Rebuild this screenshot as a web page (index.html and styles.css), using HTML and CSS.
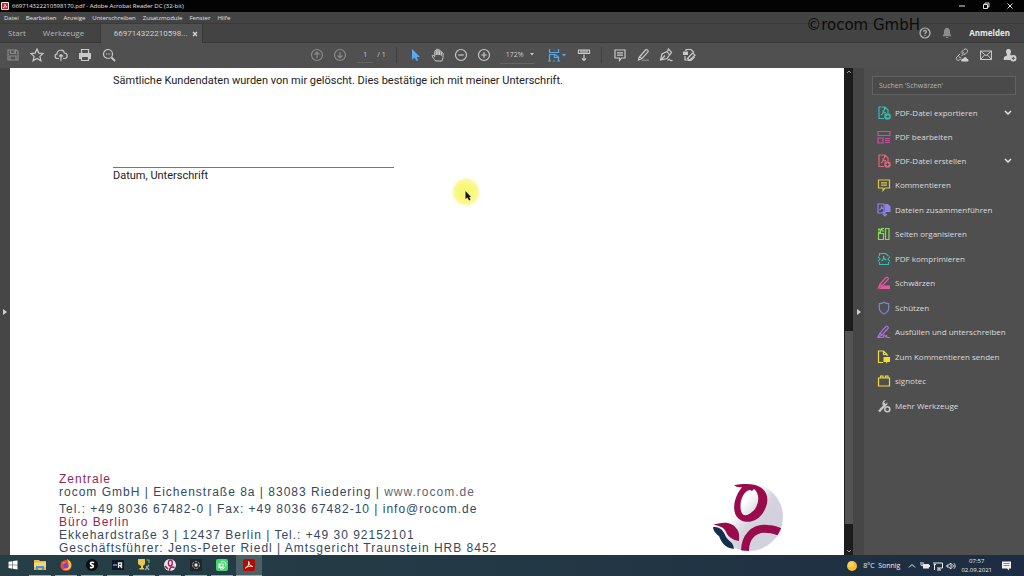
FILE: index.html
```html
<!DOCTYPE html>
<html lang="de">
<head>
<meta charset="utf-8">
<meta name="viewport" content="width=device-width, initial-scale=1">
<title>669714322210598170.pdf - Adobe Acrobat Reader DC (32-bit)</title>
<link rel="stylesheet" href="styles.css">
</head>
<body class="desktop">
<header class="titlebar">
  <svg class="app-icon" viewBox="0 0 8 8"><rect width="8" height="8" rx="1" fill="#f3e9e9"/><rect x="1" y="1" width="6" height="6" fill="#c9252d"/><path d="M2 6C3.500 5 4 3.500 4 2 4 3.500 5 5 6 5 4.500 4.500 3 5 2 6Z" fill="none" stroke="#fff" stroke-width=".6"/></svg>
  <h1 class="window-title">669714322210598170.pdf - Adobe Acrobat Reader DC (32-bit)</h1>
  <div class="window-buttons">
    <button class="btn" aria-label="Minimieren"><svg viewBox="0 0 8 8"><path d="M1 4h6" class="thin"/></svg></button>
    <button class="btn" aria-label="Wiederherstellen"><svg viewBox="0 0 8 8"><path d="M1.500 2.500h4v4h-4zM3 2.500V1h4v4H5.500" class="thin"/></svg></button>
    <button class="btn" aria-label="Schließen"><svg viewBox="0 0 8 8"><path d="M1.500 1.500l5 5M6.500 1.500l-5 5" class="thin"/></svg></button>
  </div>
</header>
<nav class="menubar" aria-label="Menü">
  <button class="btn">Datei</button><button class="btn">Bearbeiten</button><button class="btn">Anzeige</button><button class="btn">Unterschreiben</button><button class="btn">Zusatzmodule</button><button class="btn">Fenster</button><button class="btn">Hilfe</button>
</nav>
<div class="tabs">
  <button class="btn tab">Start</button>
  <button class="btn tab tab-tools">Werkzeuge</button>
  <div class="tab-active"><span>669714322210598...</span><button class="btn tab-close" aria-label="Tab schließen"><svg viewBox="0 0 6 6"><path d="M1 1l4 4M5 1L1 5" stroke="#d8d8d8" stroke-width="1.300"/></svg></button></div>
  <div class="account">
    <button class="btn" aria-label="Hilfe"><svg class="i12" viewBox="0 0 12 12"><circle cx="6" cy="6" r="5" class="ln"/><path d="M4.500 4.700C4.600 3 7.500 3 7.400 4.700 7.400 5.700 6 5.700 6 7M6 8v1" class="ln"/></svg></button>
    <button class="btn" aria-label="Mitteilungen"><svg class="i12" viewBox="0 0 12 12"><path d="M6 .8C3.500 1 3 3 3 5 3 7.500 2 8 1.500 9.300h9C10 8 9 7.500 9 5 9 3 8.500 1 6 .8ZM4.700 10h2.600C7 11.500 5 11.500 4.700 10Z" fill="#8b8b8b"/></svg></button>
    <button class="btn login">Anmelden</button>
  </div>
  <div class="watermark">©rocom GmbH</div>
</div>
<div class="toolbar">
  <div class="tools-left">
    <button class="btn" aria-label="Speichern"><svg class="i14 dim" viewBox="0 0 14 14"><path d="M2 2h8.500L12 3.500V12H2zM4.500 2v3.500h5V2M4 12V8h6v4M8 3v1.500" class="ln"/></svg></button>
    <button class="btn" aria-label="Favorit"><svg class="i14" viewBox="0 0 14 14"><path d="M7 1l1.800 4.100 4.400.400-3.300 2.900 1 4.400L7 10.500l-3.900 2.300 1-4.400L.8 5.500l4.400-.4z" class="ln"/></svg></button>
    <button class="btn" aria-label="Hochladen"><svg class="i14" viewBox="0 0 14 14"><path d="M5 10.500H3.500C.5 10.500.3 6.500 3 6.200 3 1.500 9.500.8 10.300 5 14 5 14 10.500 10.800 10.500H9M7 13V6.500M5 8.500l2-2 2 2" class="ln"/></svg></button>
    <button class="btn" aria-label="Drucken"><svg class="i14" viewBox="0 0 14 14"><path d="M3.500 5V1.500h7V5" class="ln"/><path d="M1 5h12v6h-2V8.500H3V11H1z" fill="#c9c9c9"/><path d="M3.500 8.500h7v4h-7z" class="ln"/></svg></button>
    <button class="btn" aria-label="Suchen"><svg class="i14" viewBox="0 0 14 14"><circle cx="6" cy="6" r="4.500" class="ln"/><path d="M9.500 9.500L13 13" stroke="#c9c9c9" stroke-width="1.800"/><path d="M4 6h4.500" class="ln" stroke-dasharray="1 .6"/></svg></button>
  </div>
  <div class="tools-mid">
    <button class="btn" aria-label="Vorige Seite"><svg class="i14 dim" viewBox="0 0 14 14"><circle cx="7" cy="7" r="5.500" class="ln"/><path d="M7 10V4M4.500 6.500L7 4l2.500 2.500" class="ln"/></svg></button>
    <button class="btn" aria-label="Nächste Seite"><svg class="i14 dim" viewBox="0 0 14 14"><circle cx="7" cy="7" r="5.500" class="ln"/><path d="M7 4v6M4.500 7.500L7 10l2.500-2.500" class="ln"/></svg></button>
    <div class="page-no"><input class="page-input" aria-label="Seite" value="1"><span>/ 1</span></div>
    <i class="sep"></i>
    <button class="btn" aria-label="Auswahl"><svg class="i14" viewBox="0 0 14 14"><path d="M4 1v11l2.500-2.500L8.500 13l1.700-.8L8.500 9H12z" fill="#58a9f0"/></svg></button>
    <button class="btn" aria-label="Hand"><svg class="i14" viewBox="0 0 14 14"><path d="M4.500 13C3.500 11 1.500 9.500 1 7.500c.8-.8 1.800 0 2.700 1.200V3.500c0-1.300 1.600-1.300 1.600 0V7 2c0-1.300 1.700-1.300 1.700 0v5V2.500c0-1.300 1.700-1.300 1.700 0V7 4c0-1.300 1.700-1.300 1.700 0V7.500 5.500c0-1.300 1.700-1.300 1.700 0 .2 3-.1 5-1.200 7.500z" class="thin"/></svg></button>
    <button class="btn" aria-label="Verkleinern"><svg class="i14" viewBox="0 0 14 14"><circle cx="7" cy="7" r="5.500" class="ln"/><path d="M4.300 7h5.400" class="ln"/></svg></button>
    <button class="btn" aria-label="Vergrößern"><svg class="i14" viewBox="0 0 14 14"><circle cx="7" cy="7" r="5.500" class="ln"/><path d="M4.300 7h5.400M7 4.300v5.400" class="ln"/></svg></button>
    <div class="zoom"><select class="zoom-select" aria-label="Zoom"><option>172%</option></select><svg class="caret" viewBox="0 0 4 3"><path d="M0 0h4L2 2.500z" fill="#c9c9c9"/></svg></div>
    <button class="btn fit blue" aria-label="Seitenbreite"><svg class="i14" viewBox="0 0 14 14"><path d="M2.500 1v3.500h9V1M2.500 13V6.500H8L11.500 9v4M7.500 6.500v3h4M1 13h3M6 13h2M10 13h3" class="ln"/></svg><svg class="caret" viewBox="0 0 4 3"><path d="M0 0h4L2 2.500z" fill="#58a9e8"/></svg></button>
    <button class="btn read" aria-label="Lesemodus"><svg class="i14" viewBox="0 0 14 14"><path d="M1.500 2h11v3.500h-11zM4 2v3M6 2v3M8 2v3M10 2v3M7 6.500v6M5 10.500l2 2 2-2" class="ln"/></svg></button>
    <i class="sep"></i>
    <button class="btn" aria-label="Kommentar"><svg class="i14" viewBox="0 0 14 14"><path d="M2 2h10v8H8.500l-2 2.500V10H2zM4 4.800h6M4 7.200h6" class="ln"/></svg></button>
    <button class="btn" aria-label="Markieren"><svg class="i14" viewBox="0 0 14 14"><path d="M3 9.500L9.500 2c1-1 3.500.2 2.500 2L6 10.500 2.500 12zM3.500 9L6 10.700" class="ln"/><path d="M7 11.500h6V13H5z" fill="#808080"/></svg></button>
    <button class="btn" aria-label="Signieren"><svg class="i14" viewBox="0 0 14 14"><path d="M1.500 12L3 6l5-2.500L10.500 7 8 10.500zM8.500 3L9.500 1l3 3.500L10.700 7M2 12l4-4.500M8.500 12.500c1-1.500 2-1.500 2.500-.5s1.500.5 2.500.5" class="ln"/></svg></button>
    <button class="btn" aria-label="Stempel"><svg class="i14" viewBox="0 0 14 14"><path d="M4 3V1.500h5L12 4.500M3 8v4h3M12.500 9L9 12.500H6" class="ln"/><path d="M1 3.500h5v3.500H1z" fill="#c9c9c9"/><path d="M5.500 10.500L10.500 5l2.500 2.200L8 12z" class="ln"/></svg></button>
  </div>
  <div class="tools-right">
    <button class="btn" aria-label="Link teilen"><svg class="i14" viewBox="0 0 14 14"><path d="M6.500 8L9 5.500M6 4.500l3-3c2-1.500 4.500.5 3.200 2.700l-3 3M5 6L1.800 9c-1.500 2 .7 4.300 2.700 3L6 10.500M4 8.500c0 1 1.500 1.500 2.200.8M7 6c-.3-1.300 1.500-2 2.300-.8" class="thin"/><path d="M6.500 13.500c-1-2 .5-3 1.700-2.600C8.700 8.500 12 8.700 12 11c2 0 2 2.500.5 2.500z" fill="#d0d0d0"/></svg></button>
    <button class="btn" aria-label="E-Mail"><svg class="i14" viewBox="0 0 14 14"><path d="M1.500 3h11v8.500h-11zM1.500 3L7 7.700 12.500 3M1.500 11.500l4-4.500M12.500 11.500l-4-4.500" class="thin"/></svg></button>
    <button class="btn" aria-label="Freigeben"><svg class="i14" viewBox="0 0 14 14"><path d="M5.500 1C8 1 8.500 3.500 7.500 5.500 7 7 7.500 7.500 9 8L7 12H.8C.5 9 1.500 8.500 3.500 7.800 4.500 7.500 4 6.500 3.500 5.500 2.500 3.500 3 1 5.500 1Z" fill="#d0d0d0"/><circle cx="10.300" cy="10.300" r="3.200" fill="#d0d0d0"/><path d="M8.800 10.300h3M10.300 8.800v3" stroke="#505050"/></svg></button>
  </div>
</div>
<main class="workspace">
  <button class="btn side-strip" aria-label="Navigationsfenster"><svg class="arrow" viewBox="0 0 4 6"><path d="M0 0l4 3-4 3z" fill="#d0d0d0"/></svg></button>
  <article class="page">
    <section class="letter">
      <p class="statement">Sämtliche Kundendaten wurden von mir gelöscht. Dies bestätige ich mit meiner Unterschrift.</p>
      <p class="signature">Datum, Unterschrift</p>
    </section>
    <footer class="imprint">
      <div class="addresses">
        <p class="office">Zentrale</p>
        <p class="address">rocom GmbH | Eichenstraße 8a | 83083 Riedering | <a class="plain" href="#">www.rocom.de</a></p>
        <p class="contact">Tel.: +49 8036 67482-0 | Fax: +49 8036 67482-10 | info@rocom.de</p>
        <p class="office">Büro Berlin</p>
        <p>Ekkehardstraße 3 | 12437 Berlin | Tel.: +49 30 92152101</p>
        <p>Geschäftsführer: Jens-Peter Riedl | Amtsgericht Traunstein HRB 8452</p>
      </div>
      <svg class="logo" viewBox="0 0 72 70" role="img" aria-label="rocom">
        <defs><linearGradient id="disc" gradientUnits="userSpaceOnUse" x1="18" y1="18" x2="46" y2="42"><stop offset=".3" stop-color="#fff"/><stop offset=".8" stop-color="#d5d4df"/><stop offset="1" stop-color="#d2d1dd"/></linearGradient>
        <clipPath id="round"><circle cx="37" cy="34" r="34"/></clipPath></defs>
        <circle cx="37" cy="34" r="34" fill="url(#disc)"/>
        <path d="M22 2C31 .5 43 0 48 4 57 9 57 20 52 28 47 38 35 42 27 36 19 30 22 15 28 7L30 4Q25 5 22 2ZM38 7C31 8 27 19 29 28 31 36 39 31 43 26 48 18 47 10 42 6L40 8Z" fill="#990b4b" fill-rule="evenodd"/>
        <g clip-path="url(#round)"><path d="M33 71C32 54 42 44 56 46Q62 46 70 50" fill="none" stroke="#990b4b" stroke-width="8"/></g>
        <path d="M1 42C9 39 19 38 24 45 28 49 27 54 27 58 21 57 16 54 14 49 12 44 6 42 1 42Z" fill="#990b4b"/>
        <path d="M1 44C9 43 12 49 14 54 17 59 21 58 22 66 12 65 9 58 7 53 4 51 1 47 1 44Z" fill="#12304d"/>
      </svg>
    </footer>
    <svg class="pointer" viewBox="0 0 32 32"><defs><radialGradient id="glow"><stop offset=".4" stop-color="#f9f777"/><stop offset=".75" stop-color="#faf99a"/><stop offset="1" stop-color="#fff" stop-opacity="0"/></radialGradient></defs><circle cx="16" cy="16" r="16" fill="url(#glow)"/><path d="M15.500 15v8l2-1.500 1.500 3 1.500-.7-1.300-2.800H21z" fill="#111"/></svg>
  </article>
  <div class="scrollbar" aria-hidden="true">
    <svg class="scroll-arrow" viewBox="0 0 6 4"><path d="M1 3l2-2 2 2" class="thin"/></svg>
    <i class="track"></i><i class="thumb"></i><i class="rest"></i>
    <svg class="scroll-arrow" viewBox="0 0 6 4"><path d="M1 1l2 2 2-2" class="thin"/></svg>
  </div>
  <button class="btn side-strip strip-right" aria-label="Werkzeugfenster"><svg class="arrow" viewBox="0 0 4 6"><path d="M0 0l4 3-4 3z" fill="#d0d0d0"/></svg></button>
  <aside class="panel">
    <input class="search" type="search" aria-label="Werkzeuge suchen" placeholder="Suchen 'Schwärzen'">
    <ul class="tool-list">
      <li><button class="btn tool teal"><svg class="i14" viewBox="0 0 14 14"><path d="M7 12.500H2V1h6l3 3v3M7.500 1v3.500M4 9c2-1 2.500-3 2-5 0 2 1 3 3 3" class="ln"/><circle cx="10.500" cy="10.500" r="3.300" fill="currentColor"/><path d="M8.800 10.500h3M10.500 9l1.500 1.500-1.500 1.500" stroke="#4f4f4f" fill="none"/></svg><span>PDF-Datei exportieren</span><svg class="chev" viewBox="0 0 8 6"><path d="M1 1l3 3 3-3"/></svg></button></li>
      <li><button class="btn tool magenta"><svg class="i14" viewBox="0 0 14 14"><path d="M1 1.500h12v4H1zM1 8h5v5H1zM8 8.500h5M8 10.500h5M8 12.500h5" class="ln"/></svg><span>PDF bearbeiten</span></button></li>
      <li><button class="btn tool rose"><svg class="i14" viewBox="0 0 14 14"><path d="M7 12.500H2V1h6l3 3v3M7.500 1v3.500M4 9c2-1 2.500-3 2-5 0 2 1 3 3 3" class="ln"/><circle cx="10.500" cy="10.500" r="3.300" fill="currentColor"/><path d="M8.800 10.500h3.400M10.500 8.800v3.400" stroke="#4f4f4f"/></svg><span>PDF-Datei erstellen</span><svg class="chev" viewBox="0 0 8 6"><path d="M1 1l3 3 3-3"/></svg></button></li>
      <li><button class="btn tool yellow"><svg class="i14" viewBox="0 0 14 14"><path d="M1.500 2h11v8H8l-2 2.500V10H1.500zM4 4.800h6M4 7.200h6" class="ln"/></svg><span>Kommentieren</span></button></li>
      <li><button class="btn tool violet"><svg class="i14" viewBox="0 0 14 14"><path d="M1 1h6v9H1zM2.500 7c2-1 2.500-2 2-4 0 1.500.5 2.500 2 2.500M5.500 9H8v4M6 11l2 2 2-2" class="ln"/><path d="M8 1h3l2.500 2.500V9H8z" fill="currentColor"/></svg><span>Dateien zusammenführen</span></button></li>
      <li><button class="btn tool green"><svg class="i14" viewBox="0 0 14 14"><path d="M1.500 6.500h5v6h-5zM8.500 1.500H12v11H8.500z" class="ln"/><path d="M1 1.500h2v2H1zM4 1h3v1H5l2 2-1 1-2-2v2H3V3zM1 4.500h3V6H1z" fill="currentColor"/></svg><span>Seiten organisieren</span></button></li>
      <li><button class="btn tool teal"><svg class="i14" viewBox="0 0 14 14"><path d="M2.500 4V1.500h6l3 2.500M11.500 10v2.500h-9V10M1 4.500l2 2.500-2 2.500M13 4.500L11 7l2 2.500M4.500 9c2-1 2.500-3 2-5 0 2 1 3.500 3 4" class="ln"/></svg><span>PDF komprimieren</span></button></li>
      <li><button class="btn tool pink"><svg class="i14" viewBox="0 0 14 14"><path d="M1.500 12L3 8l6-6.500c1-1 3 .8 2 2L5 10zM3 8l2 2" class="ln"/><path d="M7 9.500h6V13H1.500z" fill="currentColor"/></svg><span>Schwärzen</span></button></li>
      <li><button class="btn tool indigo"><svg class="i14" viewBox="0 0 14 14"><path d="M7 1.200c1.500 1 3 1.500 4.700 1.500V7c0 3-2 4.800-4.700 6-2.700-1.200-4.700-3-4.700-6V2.700C4 2.700 5.500 2.200 7 1.200Z" class="ln"/></svg><span>Schützen</span></button></li>
      <li><button class="btn tool purple"><svg class="i14" viewBox="0 0 14 14"><path d="M1 12L3 8l6-6.500c1-1 3 .8 2 2L5 10zM3 8l2 2M1 12.500h5c1-4 2.500-2.500 2 0 1.500-3 2-2 2 0h3" class="ln"/></svg><span>Ausfüllen und unterschreiben</span></button></li>
      <li><button class="btn tool lemon"><svg class="i14" viewBox="0 0 14 14"><path d="M6 12.500H1.500V1h5L10 4.500V6M6.500 1v3.500H10" class="ln"/><path d="M6.500 7H13v5h-2.500L9 13.500V12H6.500z" fill="currentColor"/></svg><span>Zum Kommentieren senden</span></button></li>
      <li><button class="btn tool lemon"><svg class="i14" viewBox="0 0 14 14"><path d="M1.500 4h11v8h-11zM3.500 4V2H6v2M8.500 4V2H11v2" class="ln"/></svg><span>signotec</span></button></li>
      <li><button class="btn tool grey"><svg class="i14" viewBox="0 0 14 14"><path d="M2 12.500L8 6" stroke="currentColor" stroke-width="2.400"/><path d="M9 1C6 1 4.500 4 6 6.500 8.500 8 11 6 10.500 3.500L8.500 5 7 3.500z" fill="currentColor"/><circle cx="10.300" cy="10.300" r="2.500" fill="#4f4f4f" stroke="currentColor" stroke-width="1.500"/></svg><span>Mehr Werkzeuge</span></button></li>
    </ul>
  </aside>
</main>
<footer class="taskbar">
  <div class="apps">
    <button class="btn app start" aria-label="Start"><svg class="i12" viewBox="0 0 12 12"><path d="M1.500 2.800l4-.6v3.500h-4zM6 2.100l4.500-.6v4.200H6zM1.500 6.200h4v3.500l-4-.6zM6 6.200h4.500v4.200L6 9.800z" fill="#fff"/></svg></button>
    <button class="btn app run" aria-label="Explorer"><svg class="i12" viewBox="0 0 12 12"><path d="M0 1h5l1 1h6v9H0z" fill="#e9b84a"/><path d="M0 3.500h12V8H0z" fill="#f6d778"/><path d="M2 7h8v4H8V9H4v2H2z" fill="#3d98dc"/></svg></button>
    <button class="btn app run" aria-label="Firefox"><svg class="i12" viewBox="0 0 12 12"><circle cx="6" cy="6.500" r="5.500" fill="#f0483e"/><path d="M7 0c4 2 5 5 4 8s-6 4-8 2c5 0 7-4 4-10Z" fill="#ffc43a"/><path d="M1 2l2 1.500h3L4.500 6z" fill="#ff9427"/><circle cx="6" cy="6.700" r="2.600" fill="#7a45d0"/></svg></button>
    <button class="btn app run" aria-label="S"><svg class="i12" viewBox="0 0 12 12"><circle cx="6" cy="6" r="6" fill="#0b0d0f"/><path d="M8 3.800C6 2.500 3.500 4 5 5.500l2 1C8 8 6 9.300 4 8.200" fill="none" stroke="#fff" stroke-width="1.700"/></svg></button>
    <button class="btn app run" aria-label="R"><svg class="i12" viewBox="0 0 12 12"><path d="M0 1h12v10H0z" fill="#121923"/><path d="M1 5h4v2H1z" fill="#477fce"/><path d="M6.500 9V4h3v2.500h-3M8 6.500L10 9" fill="none" stroke="#e8e8e8" stroke-width="1.300"/></svg></button>
    <button class="btn app run" aria-label="Werkzeug"><svg class="i12" viewBox="0 0 12 12"><path d="M0 0h7v5L5 7v2h1v1.500H1.500V9H3V7L0 5z" fill="#ebc64a"/><path d="M8.500 1H11v3" fill="none" stroke="#67b968" stroke-width="1.200"/><path d="M7 11l4-5M8 7l3 4" fill="none" stroke="#98a5a5" stroke-width="1.300"/></svg></button>
    <button class="btn app run" aria-label="rocom"><svg class="i12" viewBox="0 0 12 12"><circle cx="6" cy="6" r="6" fill="#eee5ec"/><ellipse cx="6.300" cy="4" rx="2" ry="3" fill="none" stroke="#a01853" stroke-width="1.300"/><path d="M5.500 12c0-4 2-4.500 5-3.500M1 7l3 3" fill="none" stroke="#a01853" stroke-width="1.500"/></svg></button>
    <button class="btn app run" aria-label="Aufnahme"><svg class="i12" viewBox="0 0 12 12"><rect width="12" height="12" rx="1" fill="#22252b"/><circle cx="6" cy="6" r="3.500" fill="none" stroke="#aab8bd" stroke-dasharray="2 1"/><circle cx="6" cy="6" r="1.700" fill="#e0e4e6"/></svg></button>
    <button class="btn app run" aria-label="Sync"><svg class="i12" viewBox="0 0 12 12"><rect width="12" height="12" rx="2" fill="#43d76d"/><path d="M2.500 4.500h5v4.500h-5z" fill="#fff"/><path d="M5 3c3-2 6 1 4.500 4M9 8c-1 2-3 2.500-5 1.500" fill="none" stroke="#fff"/><circle cx="5.500" cy="6.500" r="1.200" fill="#43d76d"/></svg></button>
    <button class="btn app run current" aria-label="Acrobat"><svg class="i12" viewBox="0 0 12 12"><rect width="12" height="12" rx="2" fill="#b30b00"/><path d="M2.500 9C5 8 6.200 5 5.700 2.500 5.700 5 7.500 7.300 9.700 7.500 7 6.500 4 7.500 2.500 9Z" fill="none" stroke="#fff"/></svg></button>
  </div>
  <div class="tray">
    <svg class="i12" viewBox="0 0 12 12"><circle cx="6" cy="6" r="5" fill="#f8bd32"/><circle cx="5" cy="4.500" r="3" fill="#fbd35b"/></svg>
    <span class="weather">8°C&nbsp; Sonnig</span>
    <div class="tray-icons">
      <svg class="i10" viewBox="0 0 10 10"><path d="M2 6.500l3-3 3 3" class="thin"/></svg>
      <svg class="i10" viewBox="0 0 10 10"><path d="M3 3h6v4.500H3z" fill="#e8e8e8"/><path d="M1 1v3c0 1 2 1 2 0V1" class="thin"/><path d="M9.500 4v2" class="thin"/></svg>
      <svg class="i10" viewBox="0 0 10 10"><path d="M2 2h7.500v5H4M6 7v2M4 9h4M1 1v2.500h2M1.500 3.500V9" class="thin"/></svg>
      <svg class="i10" viewBox="0 0 10 10"><path d="M1 4h1.500L5 2v6L2.500 6H1zM6.500 3.500c1 1 1 2 0 3M8 2.300c1.500 1.700 1.500 3.700 0 5.400" class="thin"/></svg>
    </div>
    <time class="clock" datetime="2021-09-02T07:57"><span>07:57</span><span>02.09.2021</span></time>
    <button class="btn" aria-label="Benachrichtigungen"><svg class="i12" viewBox="0 0 12 12"><path d="M1 1.500h9v7H8v2L6 8.500H1z" fill="#f0f0f0"/><path d="M2.500 3.500h6M2.500 5.500h6" stroke="#506070" stroke-width=".7"/></svg></button>
  </div>
</footer>
</body>
</html>
```
FILE: styles.css
```css
* { box-sizing: border-box; }
html, body { height: 100%; }
body, h1, p, ul { margin: 0; padding: 0; }
ul { list-style: none; }
svg { display: block; flex: none; }

.desktop {
  display: flex;
  flex-direction: column;
  overflow: hidden;
  background: #4f4f4f;
  color: #e2e2e2;
  font: 7px/10px "Open Sans", "Noto Sans", sans-serif;
}
.btn {
  display: flex;
  align-items: center;
  padding: 0;
  border: 0;
  background: none;
  color: inherit;
  font: inherit;
  white-space: nowrap;
}
.ln { fill: none; stroke: currentColor; stroke-width: 1.2; }
.thin { fill: none; stroke: currentColor; }
.i10 { width: 10px; height: 10px; }
.i12 { width: 12px; height: 12px; }
.i14 { width: 14px; height: 14px; }
.dim { color: #8b8b8b; }
.blue { color: #58a9e8; }

.titlebar {
  display: flex;
  align-items: center;
  flex: none;
  height: 12px;
  padding: 0 10px 0 1px;
  gap: 3px;
  background: #030303;
}
.app-icon { width: 8px; height: 8px; }
.window-title { flex: 1; font-size: 6px; font-weight: 400; }
.window-buttons { display: flex; gap: 16px; }
.window-buttons svg { width: 8px; height: 8px; }

.menubar {
  display: flex;
  align-items: center;
  flex: none;
  height: 11px;
  padding-left: 4px;
  gap: 7px;
  background: #434343;
  font-size: 6px;
}

.tabs {
  position: relative;
  display: flex;
  flex: none;
  height: 20px;
  background: #434343;
  border-top: 1px solid #3a3a3a;
  color: #b8b8b8;
  font-size: 8px;
}
.tab { padding-left: 8px; border-bottom: 1px solid #383838; }
.tab-tools { width: 74px; padding-left: 17px; }
.tab-active {
  display: flex;
  align-items: center;
  gap: 4px;
  padding: 0 4px 0 13px;
  border-left: 1px solid #383838;
  border-right: 1px solid #383838;
  background: #505050;
  color: #cfcfcf;
  font-family: Roboto, sans-serif;
}
.tab-close svg { width: 6px; height: 6px; }
.account {
  display: flex;
  flex: 1;
  align-items: center;
  justify-content: flex-end;
  gap: 10px;
  padding-right: 14px;
  border-bottom: 1px solid #383838;
}
.login { padding-left: 6px; color: #e8e8e8; font-weight: 700; font-size: 8px; }
.watermark {
  position: absolute;
  right: 104px;
  top: -8px;
  color: #0c0c0c;
  font: 15px/18px "DejaVu Sans", sans-serif;
}

.toolbar {
  display: grid;
  grid-template-columns: 1fr auto 1fr;
  align-items: center;
  flex: none;
  height: 25px;
  padding-bottom: 1px;
  background: #505050;
  color: #c9c9c9;
}
.tools-left, .tools-mid, .tools-right { display: flex; align-items: center; }
.tools-left { gap: 10px; padding-left: 6px; }
.tools-mid { gap: 9px; padding-right: 18px; }
.tools-right { gap: 10px; justify-content: flex-end; padding-right: 7px; }
.page-no { display: flex; align-items: center; gap: 4px; padding-left: 1px; }
.page-input {
  width: 16px;
  height: 16px;
  padding: 0;
  border: 0;
  border-bottom: 1px solid #666;
  background: none;
  color: inherit;
  font: inherit;
  text-align: center;
}
.sep { width: 1px; height: 16px; margin: 0 2px 0 1px; background: #404040; }
.zoom { display: flex; align-items: center; padding-left: 6px; border-bottom: 1px solid #666; }
.zoom-select {
  width: 24px;
  height: 16px;
  padding: 0;
  border: 0;
  appearance: none;
  background: none;
  color: inherit;
  font: inherit;
}
.caret { width: 4px; height: 3px; }
.fit { gap: 1px; padding-left: 4px; }
.read { padding-left: 2px; }

.workspace { display: flex; flex: 1; min-height: 0; }
.side-strip { flex: none; justify-content: center; width: 10px; background: #464646; }
.strip-right { width: 11px; }
.page {
  position: relative;
  display: flex;
  flex: 1;
  flex-direction: column;
  justify-content: space-between;
  min-width: 0;
  background: #fff;
}
.arrow { width: 4px; height: 6px; }
.letter { padding: 5px 103px 0; color: #222; font: 11px/16px Roboto, "Noto Sans", sans-serif; }
.signature { width: 281px; margin-top: 78px; border-top: 1px solid #777; }
.imprint {
  display: flex;
  justify-content: space-between;
  align-items: flex-end;
  padding: 0 60px 0 49px;
  color: #34495f;
  font: 12px/13px "Liberation Sans", Arial, sans-serif;
  letter-spacing: 1px;
  white-space: nowrap;
}
.office { color: #96265a; }
.contact { margin-top: 4px; }
.plain { color: #5b6674; text-decoration: none; }
.logo { width: 72px; height: 70px; margin-bottom: 2px; }
.pointer { position: absolute; left: 440px; top: 108px; width: 32px; height: 32px; }

.scrollbar {
  display: flex;
  flex: none;
  flex-direction: column;
  align-items: center;
  width: 9px;
  padding: 2px 0;
  background: #1c1c1c;
  color: #999;
}
.scroll-arrow { width: 6px; height: 4px; }
.track { flex: 257; }
.thumb { flex: 193; width: 8px; background: #535353; }
.rest { flex: 25; }

.panel { flex: none; width: 160px; padding: 8px 8px 0; }
.search {
  display: block;
  width: 100%;
  height: 19px;
  padding: 0 6px;
  border: 1px solid #626262;
  background: #4a4a4a;
  color: #c9c9c9;
  font: inherit;
}
.search::placeholder { color: #b4b4b4; opacity: 1; }
.tool-list { padding: 6px 4px 0 5px; }
.tool { width: 100%; height: 24px; gap: 4px; }
.tool-list li:nth-child(2n + 5) .tool { height: 25px; }
.tool span { flex: 1; color: #dcdcdc; font-size: 8px; text-align: left; }
.chev { width: 8px; height: 6px; fill: none; stroke: #e4e4e4; stroke-width: 1.5; }
.teal { color: #35bfae; }
.magenta { color: #cf4fa5; }
.rose { color: #e2667a; }
.yellow { color: #d9c847; }
.violet { color: #8b82ee; }
.green { color: #86dc4e; }
.pink { color: #e756a3; }
.indigo { color: #8280d8; }
.purple { color: #a970dc; }
.lemon { color: #eede39; }
.grey { color: #c9c9c9; }

.taskbar {
  display: flex;
  justify-content: space-between;
  flex: none;
  height: 21px;
  background: linear-gradient(90deg, #263f45, #233845 50%, #1d2c42);
  color: #ededed;
}
.apps { display: flex; gap: 4px; }
.app { justify-content: center; width: 22px; border-bottom: 1px solid transparent; }
.start { width: 25px; }
.run { border-bottom-color: #6fb9e4; }
.current { width: 26px; margin-left: -1px; background: #4c6166; }
.tray { display: flex; align-items: center; gap: 5px; padding-right: 11px; }
.weather { font-size: 7px; }
.tray-icons { display: flex; gap: 3px; padding-left: 2px; }
.clock { display: flex; flex-direction: column; align-items: center; padding-right: 4px; font-size: 6px; line-height: 9px; }
```
